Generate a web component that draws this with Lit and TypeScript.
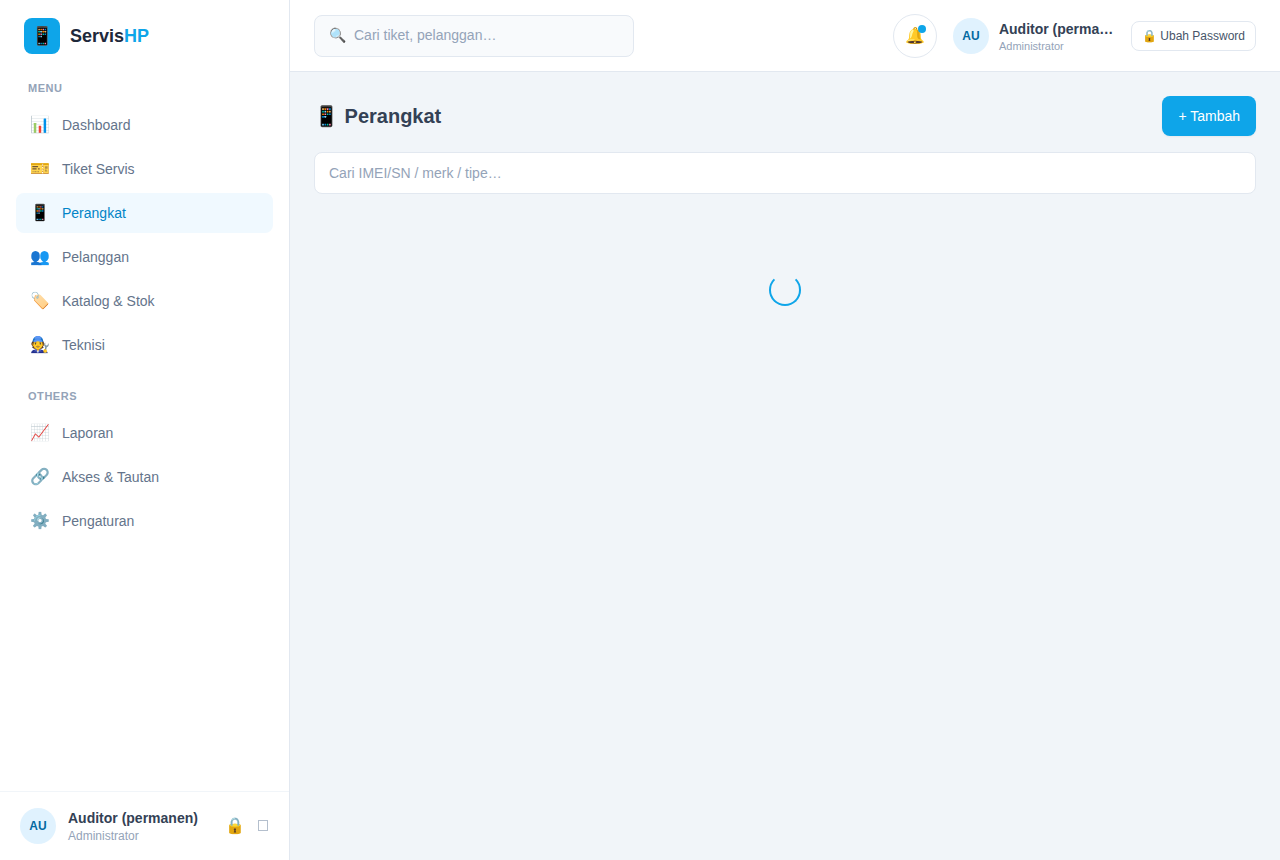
import { LitElement, html, css } from "lit";
import { customElement, property } from "lit/decorators.js";

interface NavEntry {
  icon: string;
  label: string;
  href: string;
  active?: boolean;
}

const MENU: NavEntry[] = [
  { icon: "📊", label: "Dashboard", href: "#dashboard" },
  { icon: "🎫", label: "Tiket Servis", href: "#tiket" },
  { icon: "📱", label: "Perangkat", href: "#perangkat", active: true },
  { icon: "👥", label: "Pelanggan", href: "#pelanggan" },
  { icon: "🏷️", label: "Katalog & Stok", href: "#katalog" },
  { icon: "🧑‍🔧", label: "Teknisi", href: "#teknisi" },
];

const OTHERS: NavEntry[] = [
  { icon: "📈", label: "Laporan", href: "#laporan" },
  { icon: "🔗", label: "Akses & Tautan", href: "#akses" },
  { icon: "⚙️", label: "Pengaturan", href: "#pengaturan" },
];

const base = css`
  :host,
  * {
    box-sizing: border-box;
  }
  button,
  input {
    font: inherit;
    color: inherit;
    margin: 0;
  }
  button {
    cursor: pointer;
  }
  .avatar {
    flex: none;
    display: grid;
    place-items: center;
    width: 36px;
    height: 36px;
    border-radius: 50%;
    background: #e0f2fe;
    color: #0369a1;
    font-size: 12px;
    font-weight: 700;
  }
  .name {
    color: #334155;
    font-size: 14px;
    line-height: 20px;
    font-weight: 700;
    white-space: nowrap;
    overflow: hidden;
    text-overflow: ellipsis;
  }
  .role {
    color: #94a3b8;
  }
  input::placeholder {
    color: #94a3b8;
    opacity: 1;
  }
`;

@customElement("app-sidebar")
export class AppSidebar extends LitElement {
  static styles = [
    base,
    css`
      :host {
        display: flex;
        flex-direction: column;
        background: #ffffff;
        border-right: 1px solid #e2e8f0;
      }
      .brand {
        display: flex;
        align-items: center;
        gap: 10px;
        height: 72px;
        padding: 0 24px;
        color: #1e293b;
        font-size: 18px;
        font-weight: 700;
      }
      .mark {
        display: grid;
        place-items: center;
        width: 36px;
        height: 36px;
        border-radius: 8px;
        background: #0ea5e9;
        font-weight: 400;
      }
      .accent {
        color: #0ea5e9;
      }
      nav {
        flex: 1;
        display: flex;
        flex-direction: column;
        gap: 23px;
        padding: 8px 16px;
      }
      h2 {
        margin: 0 0 8px;
        padding: 0 12px;
        color: #94a3b8;
        font-size: 11px;
        line-height: 17px;
        font-weight: 700;
        letter-spacing: 0.05em;
      }
      ul {
        display: flex;
        flex-direction: column;
        gap: 4px;
        margin: 0;
        padding: 0;
        list-style: none;
      }
      .link {
        display: flex;
        align-items: center;
        gap: 12px;
        height: 40px;
        padding: 0 14px;
        border-radius: 8px;
        color: #64748b;
        text-decoration: none;
      }
      .link.active {
        background: #f0f9ff;
        color: #0284c7;
      }
      .icon {
        display: flex;
        justify-content: center;
        width: 20px;
        font-size: 16px;
      }
      .account {
        display: flex;
        align-items: center;
        gap: 12px;
        padding: 16px 20px;
        border-top: 1px solid #f1f5f9;
      }
      .who {
        flex: 1;
        min-width: 0;
      }
      .role {
        font-size: 12px;
        line-height: 16px;
      }
      .tool {
        display: flex;
        align-items: center;
        padding: 0;
        border: 0;
        background: none;
        color: #94a3b8;
        font-size: 16px;
      }
    `,
  ];

  private group(title: string, items: NavEntry[]) {
    return html`<section>
      <h2>${title}</h2>
      <ul>
        ${items.map(
          (item) => html`<li>
            <a
              class="link ${item.active ? "active" : ""}"
              href=${item.href}
              aria-current=${item.active ? "page" : "false"}
              ><span class="icon">${item.icon}</span>${item.label}</a
            >
          </li>`
        )}
      </ul>
    </section>`;
  }

  render() {
    return html`
      <div class="brand">
        <span class="mark">📱</span>
        <span>Servis<span class="accent">HP</span></span>
      </div>
      <nav>${this.group("MENU", MENU)} ${this.group("OTHERS", OTHERS)}</nav>
      <div class="account">
        <span class="avatar">AU</span>
        <div class="who">
          <div class="name">Auditor (permanen)</div>
          <div class="role">Administrator</div>
        </div>
        <button class="tool" type="button" aria-label="Ubah Password">🔒</button>
        <button class="tool" type="button" aria-label="Keluar">
          <svg width="12" height="16" viewBox="0 0 12 16" fill="none" stroke="#b4bfcd">
            <rect x="1.5" y="2.5" width="9" height="10" />
          </svg>
        </button>
      </div>
    `;
  }
}

@customElement("app-topbar")
export class AppTopbar extends LitElement {
  static styles = [
    base,
    css`
      :host {
        display: flex;
        align-items: center;
        justify-content: space-between;
        gap: 16px;
        height: 72px;
        padding: 0 24px;
        background: #ffffff;
        border-bottom: 1px solid #e2e8f0;
      }
      .search {
        display: flex;
        align-items: center;
        gap: 8px;
        flex: 0 1 320px;
        height: 42px;
        padding: 0 14px;
        border: 1px solid #e2e8f0;
        border-radius: 8px;
        background: #f8fafc;
      }
      .search input {
        flex: 1;
        min-width: 0;
        padding: 0;
        border: 0;
        outline: 0;
        background: none;
      }
      .actions {
        display: flex;
        align-items: center;
        gap: 16px;
      }
      .bell {
        position: relative;
        display: flex;
        align-items: center;
        justify-content: center;
        width: 44px;
        height: 44px;
        padding: 0;
        border: 1px solid #e2e8f0;
        border-radius: 50%;
        background: #ffffff;
        font-size: 16px;
      }
      .dot {
        position: absolute;
        top: 10px;
        right: 10px;
        width: 8px;
        height: 8px;
        border-radius: 50%;
        background: #0ea5e9;
      }
      .user {
        display: flex;
        align-items: center;
        gap: 10px;
      }
      .who {
        width: 116px;
      }
      .role {
        font-size: 11px;
        line-height: 14px;
      }
      .password {
        height: 30px;
        padding: 0 10px;
        border: 1px solid #e2e8f0;
        border-radius: 8px;
        background: #ffffff;
        color: #475569;
        font-size: 12px;
        white-space: nowrap;
      }
    `,
  ];

  render() {
    return html`
      <label class="search">
        <span>🔍</span>
        <input type="text" aria-label="Cari tiket, pelanggan" placeholder="Cari tiket, pelanggan…" />
      </label>
      <div class="actions">
        <button class="bell" type="button" aria-label="Notifikasi">
          <span>🔔</span><span class="dot"></span>
        </button>
        <div class="user">
          <span class="avatar">AU</span>
          <div class="who">
            <div class="name">Auditor (permanen)</div>
            <div class="role">Administrator</div>
          </div>
        </div>
        <button class="password" type="button">🔒 Ubah Password</button>
      </div>
    `;
  }
}

@customElement("device-page")
export class DevicePage extends LitElement {
  @property({ type: Boolean }) loading = true;

  static styles = [
    base,
    css`
      :host {
        display: flex;
        flex-direction: column;
        gap: 16px;
        padding: 24px;
      }
      .head {
        display: flex;
        align-items: center;
        justify-content: space-between;
      }
      h1 {
        margin: 0;
        color: #334155;
        font-size: 20px;
        font-weight: 700;
      }
      .add {
        height: 40px;
        padding: 0 16px;
        border: 0;
        border-radius: 8px;
        background: #0ea5e9;
        color: #ffffff;
        box-shadow: 0 1px 2px rgba(0, 0, 0, 0.05);
      }
      .filter {
        width: 100%;
        height: 42px;
        padding: 0 14px;
        border: 1px solid #e2e8f0;
        border-radius: 8px;
        outline: 0;
        background: #ffffff;
      }
      .busy {
        display: flex;
        justify-content: center;
        padding: 64px 0;
      }
      .spinner {
        width: 32px;
        height: 32px;
        border: 2px solid #0ea5e9;
        border-top-color: transparent;
        border-radius: 50%;
      }
    `,
  ];

  render() {
    return html`
      <div class="head">
        <h1>📱 Perangkat</h1>
        <button class="add" type="button">+ Tambah</button>
      </div>
      <input
        class="filter"
        type="text"
        aria-label="Cari perangkat"
        placeholder="Cari IMEI/SN / merk / tipe…"
      />
      ${this.loading
        ? html`<div class="busy">
            <div class="spinner" role="status" aria-label="Memuat"></div>
          </div>`
        : ""}
    `;
  }
}

@customElement("app-root")
export class AppRoot extends LitElement {
  static styles = css`
    :host {
      display: grid;
      grid-template-columns: 290px minmax(0, 1fr);
      min-height: 100vh;
      background: #f1f5f9;
      color: #334155;
      font-family: "Liberation Sans", Arial, sans-serif;
      font-size: 14px;
      line-height: 1.5;
    }
  `;

  render() {
    return html`
      <app-sidebar></app-sidebar>
      <main>
        <app-topbar></app-topbar>
        <device-page></device-page>
      </main>
    `;
  }
}
